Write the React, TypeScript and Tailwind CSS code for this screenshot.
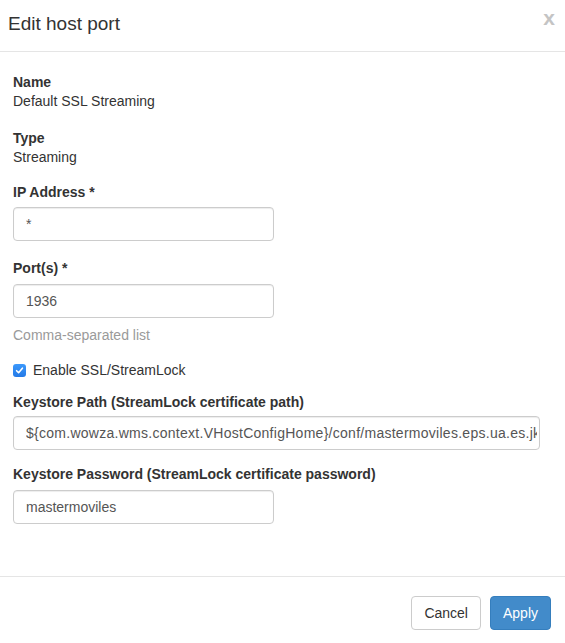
import React from "react";

const font = { fontFamily: '"Liberation Sans", Arial, sans-serif' };

function Field({ value, wide }: { value: string; wide?: boolean }) {
  return (
    <input
      readOnly
      defaultValue={value}
      className={
        "block h-[34px] rounded-[4px] border border-[#cccccc] bg-white pl-[12px] pr-[2px] text-[14px] text-[#555555] shadow-[inset_0_1px_1px_rgba(0,0,0,0.075)] outline-none " +
        (wide ? "w-[527px] tracking-[0.27px]" : "w-[261px]")
      }
      style={font}
    />
  );
}

export default function App() {
  return (
    <div className="h-[643px] w-[565px] bg-white text-[14px] leading-[19px] text-[#333333]" style={font}>
      <div className="flex h-[52px] items-start justify-between border-b border-[#e5e5e5] pl-[8px] pr-[10px]">
        <h4 className="mt-[13px] text-[19px] leading-[22px] font-normal text-[#333333]">Edit host port</h4>
        <span className="mt-[3px] text-[21px] leading-[30px] font-bold text-[#c4c4c4]">x</span>
      </div>
      <div className="h-[525px] border-b border-[#e5e5e5] px-[13px] pt-[21px]">
        <div className="font-bold">Name</div>
        <div>Default SSL Streaming</div>
        <div className="mt-[18px] font-bold">Type</div>
        <div>Streaming</div>
        <div className="mt-[16px] font-bold">IP Address *</div>
        <div className="mt-[5px]">
          <Field value="*" />
        </div>
        <div className="mt-[18px] font-bold">Port(s) *</div>
        <div className="mt-[6px]">
          <Field value="1936" />
        </div>
        <div className="mt-[8px] text-[#9a9a9a]">Comma-separated list</div>
        <div className="mt-[16px] flex items-center gap-[7px]">
          <span className="flex h-[13px] w-[13px] items-center justify-center rounded-[3px] bg-gradient-to-b from-[#3b99fc] to-[#2479e6]">
            <svg width="9" height="9" viewBox="0 0 9 9" fill="none">
              <path d="M1.6 4.7 L3.6 6.7 L7.4 2.2" stroke="white" strokeWidth="1.6" strokeLinecap="round" strokeLinejoin="round" />
            </svg>
          </span>
          <span>Enable SSL/StreamLock</span>
        </div>
        <div className="mt-[13px] font-bold">Keystore Path (StreamLock certificate path)</div>
        <div className="mt-[4px]">
          <Field wide value="${com.wowza.wms.context.VHostConfigHome}/conf/mastermoviles.eps.ua.es.jks" />
        </div>
        <div className="mt-[15px] font-bold">Keystore Password (StreamLock certificate password)</div>
        <div className="mt-[6px]">
          <Field value="mastermoviles" />
        </div>
      </div>
      <div className="flex justify-end gap-[9px] pr-[14px] pt-[19px]">
        <button className="h-[34px] rounded-[4px] border border-[#cccccc] bg-white px-[12px] text-[14px] text-[#333333]" style={font}>
          Cancel
        </button>
        <button className="h-[34px] rounded-[4px] border border-[#357ebd] bg-[#428bca] px-[12px] text-[14px] text-white" style={font}>
          Apply
        </button>
      </div>
    </div>
  );
}
